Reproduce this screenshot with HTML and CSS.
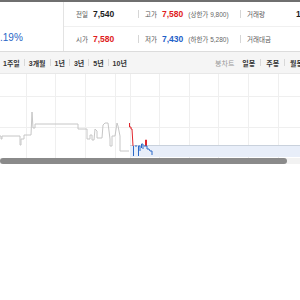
FILE: index.html
```
<!DOCTYPE html>
<html lang="ko">
<head>
    <meta charset="UTF-8">
    <meta name="viewport" content="width=device-width, initial-scale=1.0">
    <title>시세</title>
    <link rel="stylesheet" href="styles.css">
</head>
<body>
    <div class="topbar"></div>
    <div class="info">
        <div class="rate">.19%</div>
        <div class="stats">
            <div class="row">
                <div class="cell first"><span class="label">전일</span><b>7,540</b></div>
                <div class="cell"><span class="label">고가</span><b class="up">7,580</b><span class="note">(상한가 9,800)</span></div>
                <div class="cell"><span class="label">거래량</span><b class="far">1,204</b></div>
            </div>
            <div class="row">
                <div class="cell first"><span class="label">시가</span><b class="up">7,580</b></div>
                <div class="cell"><span class="label">저가</span><b class="down">7,430</b><span class="note">(하한가 5,280)</span></div>
                <div class="cell"><span class="label">거래대금</span></div>
            </div>
        </div>
    </div>
    <div class="tabs">
        <div class="periods">
            <span>1주일</span><i></i><span>3개월</span><i></i><span>1년</span><i></i><span>3년</span><i></i><span>5년</span><i></i><span>10년</span>
        </div>
        <div class="kinds">
            <span class="muted">봉차트</span><span>일봉</span><i></i><span>주봉</span><i></i><span>월봉</span>
        </div>
    </div>
    <div class="chart">
        <svg width="300" height="84" viewBox="0 73 300 84">
            <g stroke="#efefef" stroke-width="1">
                <line x1="0" y1="95.5" x2="300" y2="95.5"/>
                <line x1="0" y1="126.5" x2="300" y2="126.5"/>
                <line x1="26.5" y1="73" x2="26.5" y2="157"/>
                <line x1="55.5" y1="73" x2="55.5" y2="157"/>
                <line x1="85.5" y1="73" x2="85.5" y2="157"/>
                <line x1="115.5" y1="73" x2="115.5" y2="157"/>
                <line x1="130.5" y1="73" x2="130.5" y2="157"/>
                <line x1="159.5" y1="73" x2="159.5" y2="157"/>
                <line x1="189.5" y1="73" x2="189.5" y2="157"/>
                <line x1="218.5" y1="73" x2="218.5" y2="157"/>
                <line x1="248.5" y1="73" x2="248.5" y2="157"/>
                <line x1="278.5" y1="73" x2="278.5" y2="157"/>
            </g>
            <rect x="130" y="144" width="170" height="12" fill="#e8eef9"/>
            <line x1="130" y1="144.5" x2="300" y2="144.5" stroke="#c9d1dc"/>
            <path d="M0,135 H1 V138 H2 V135 H20 V144 H21 V138 H24 V134 H31 L32,111 L33,127 H35 V123 H78 V128 H87 V138 H90 V134 H92 V139 H94 L95,128 L97,130 V137 H102 L103,124 L105,122 H108 L110,138 V145 H112 V135 H115 L117,122 L118,125 L120,135 V150 H129" fill="none" stroke="#c6c6c6" stroke-width="1"/>
            <path d="M129.5,122 V126 H131 V128 H132 L133,145" fill="none" stroke="#e0262d" stroke-width="1"/>
            <path d="M145.5,145 V139 H146.5 V145" fill="none" stroke="#e0262d" stroke-width="1"/>
            <path d="M133.5,145 V155 M135,145 H137 M138.5,155 V145 H140 V150 M141.5,147 V143 H143 V148 M144,145 H147 V148 H149 L150,150 H152 V154" fill="none" stroke="#2a69c9" stroke-width="1"/>
        </svg>
    </div>
    <div class="track"><div class="thumb"></div></div>
</body>
</html>
```

FILE: styles.css
```
body {
    margin: 0;
    padding: 0;
    background: #fff;
    color: #222;
    font-family: "Liberation Sans", "Noto Sans CJK KR", sans-serif;
    overflow: hidden;
}
.topbar {
    height: 2px;
    background-color: #6f6f6f;
}
.info {
    display: flex;
    height: 49px;
    border-bottom: 1px solid #dcdcdc;
}
.rate {
    flex: none;
    width: 64px;
    border-right: 1px solid #e3e3e3;
    display: flex;
    align-items: flex-end;
    padding-bottom: 8px;
    box-sizing: border-box;
    font-size: 10px;
    color: #2866c6;
}
.stats {
    flex: 1;
    min-width: 0;
    overflow: hidden;
    display: flex;
    flex-direction: column;
}
.row {
    flex: 1;
    display: flex;
    align-items: center;
    white-space: nowrap;
}
.row + .row {
    border-top: 1px solid #f0f0f0;
}
.cell {
    flex: none;
    display: flex;
    align-items: center;
    gap: 5px;
    width: 102px;
    padding-left: 7px;
    box-sizing: border-box;
    font-size: 6.5px;
    position: relative;
}
.cell::before {
    content: "";
    position: absolute;
    left: 0;
    top: 50%;
    width: 1px;
    height: 8px;
    margin-top: -4px;
    background-color: #d6d6d6;
}
.cell.first {
    width: 74px;
    padding-left: 12px;
}
.cell.first::before {
    display: none;
}
.label {
    color: #555;
}
.cell b {
    font-size: 8.5px;
    color: #1d1d1d;
}
.cell b.up {
    color: #e01b22;
}
.cell b.down {
    color: #1e60c8;
}
.cell b.far {
    margin-left: 26px;
}
.note {
    color: #666;
}
.tabs {
    display: flex;
    align-items: center;
    height: 21px;
    background-color: #f5f5f5;
    border-bottom: 1px solid #e8e8e8;
    font-size: 7px;
    white-space: nowrap;
    overflow: hidden;
}
.periods, .kinds {
    flex: none;
    display: flex;
    align-items: center;
    gap: 4px;
}
.periods {
    width: 215px;
    padding-left: 3px;
    box-sizing: border-box;
}
.kinds {
    gap: 5px;
}
.tabs span {
    color: #333;
    font-weight: bold;
}
.tabs .muted {
    color: #9a9a9a;
    font-weight: normal;
    margin-right: 3px;
}
.tabs i {
    display: block;
    width: 1px;
    height: 7px;
    background-color: #d8d8d8;
}
.chart {
    height: 84px;
}
.chart svg {
    display: block;
}
.track {
    width: 300px;
    height: 6px;
    background-color: #f2f2f2;
}
.thumb {
    width: 287px;
    height: 6px;
    border-radius: 3px;
    background-color: #8a8a8a;
}
```
